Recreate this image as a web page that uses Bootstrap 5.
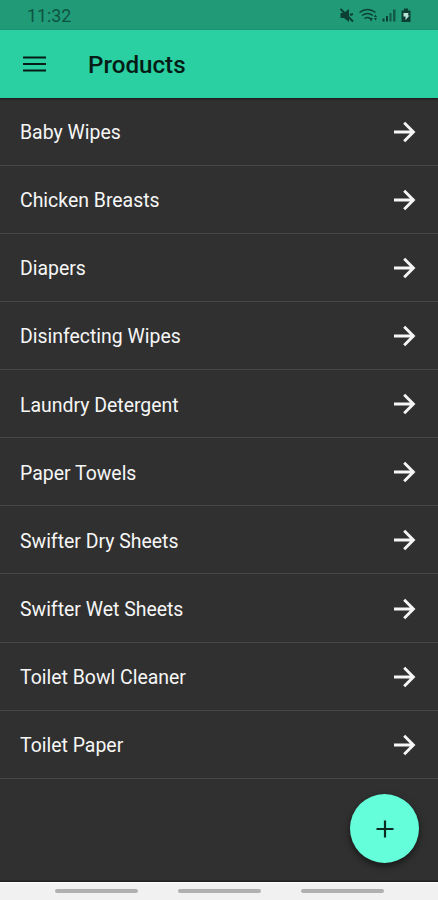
<!DOCTYPE html>
<html lang="en">
<head>
<meta charset="utf-8">
<meta name="viewport" content="width=device-width, initial-scale=1">
<title>Products</title>
<link rel="stylesheet" href="https://cdn.jsdelivr.net/npm/bootstrap@5.3.0/dist/css/bootstrap.min.css">
<style>
body { font-family: Roboto, "Liberation Sans", sans-serif; background: #303030; }
.screen { height: 900px; }
.status-bar { height: 29.5px; background: #219a78; color: #0d5440; padding: 3px 24px 0 27px; font-size: 17.8px; }
.app-bar { height: 68px; background: #2acfa2; color: #051c16; padding: 0 22px; gap: 42px; box-shadow: 0 1px 2px rgba(0,0,0,.5); z-index: 1; }
.app-title { font-size: 24.2px; font-weight: 500; line-height: 1; padding-top: 3px; }
.product-row { height: 68.15px; padding: 1px 22px 0 20px; border-bottom: 1px solid #474747; color: #f6f6f6; font-size: 19.45px; }
.product-row span { padding-top: 2px; }
.fab { right: 19px; bottom: 37px; width: 69px; height: 69px; background: #64ffda; color: #0b2a22; box-shadow: 0 3px 7px rgba(0,0,0,.55); }
.nav-strip { height: 18.5px; background: #f1f1f1; border-top: 1px solid #fff; box-shadow: 0 -1px 1px #1d1d1d; gap: 40px; }
.nav-pill { width: 83px; height: 4px; background: #b0b0b0; }
</style>
<script src="https://cdn.jsdelivr.net/npm/bootstrap@5.3.0/dist/js/bootstrap.bundle.min.js"></script>
</head>
<body>
<svg class="d-none">
  <symbol id="arrow" viewBox="0 0 24 24"><path d="M2 12H21M12.2 2.8L21.4 12L12.2 21.2" fill="none" stroke="currentColor" stroke-width="2.9"/></symbol>
</svg>
<div class="screen position-relative d-flex flex-column overflow-hidden">
  <div class="status-bar d-flex align-items-center justify-content-between flex-shrink-0">
    <span>11:32</span>
    <svg width="76" height="18" viewBox="0 0 76 18" fill="#0b4032">
      <path d="M2.500 6H6L11 2V15L6 11H2.500Z"/>
      <path d="M2.500 2L15 14.500M12 8L15 7" stroke="#0b4032" stroke-width="2"/>
      <g fill="none" stroke="#0b4032" stroke-width="1.500"><path d="M21.500 5.500Q29.500 -.5 37.500 5.500M24 8.500Q29.500 4.500 35 8.500M26.500 11.500Q29.500 9.500 32.500 11.500"/></g>
      <path d="M31 11H35L33 14.500Z M36 10L37.500 7.500L39 10Z M36 11H39L37.500 13.500Z"/>
      <path d="M44.500 11.500H46.500V14.500H44.500Z M48 9H50V14.500H48Z"/>
      <path d="M51.500 6H53.500V14.500H51.500Z M55 2.500H57.500V14.500H55Z" opacity=".7"/>
      <path d="M66 1.500H70V3.500H72.500V15H63.500V3.500H66Z"/>
      <path d="M65.500 6H70.500L70 8.500H71.500L67.500 13V9.500H65.500Z" fill="#b9e3d6"/>
    </svg>
  </div>
  <header class="app-bar d-flex align-items-center flex-shrink-0">
    <svg width="24" height="24" viewBox="0 0 24 24" stroke="currentColor" stroke-width="2.200"><path d="M1 5.500H24M1 12H24M1 18.500H24"/></svg>
    <h1 class="app-title mb-0">Products</h1>
  </header>
  <main class="flex-grow-1">
    <div class="product-row d-flex align-items-center justify-content-between"><span>Baby Wipes</span><svg width="24" height="24"><use href="#arrow"/></svg></div>
    <div class="product-row d-flex align-items-center justify-content-between"><span>Chicken Breasts</span><svg width="24" height="24"><use href="#arrow"/></svg></div>
    <div class="product-row d-flex align-items-center justify-content-between"><span>Diapers</span><svg width="24" height="24"><use href="#arrow"/></svg></div>
    <div class="product-row d-flex align-items-center justify-content-between"><span>Disinfecting Wipes</span><svg width="24" height="24"><use href="#arrow"/></svg></div>
    <div class="product-row d-flex align-items-center justify-content-between"><span>Laundry Detergent</span><svg width="24" height="24"><use href="#arrow"/></svg></div>
    <div class="product-row d-flex align-items-center justify-content-between"><span>Paper Towels</span><svg width="24" height="24"><use href="#arrow"/></svg></div>
    <div class="product-row d-flex align-items-center justify-content-between"><span>Swifter Dry Sheets</span><svg width="24" height="24"><use href="#arrow"/></svg></div>
    <div class="product-row d-flex align-items-center justify-content-between"><span>Swifter Wet Sheets</span><svg width="24" height="24"><use href="#arrow"/></svg></div>
    <div class="product-row d-flex align-items-center justify-content-between"><span>Toilet Bowl Cleaner</span><svg width="24" height="24"><use href="#arrow"/></svg></div>
    <div class="product-row d-flex align-items-center justify-content-between"><span>Toilet Paper</span><svg width="24" height="24"><use href="#arrow"/></svg></div>
  </main>
  <button class="fab btn rounded-circle border-0 p-0 position-absolute d-flex align-items-center justify-content-center" aria-label="Add product">
    <svg width="18" height="18" viewBox="0 0 18 18" stroke="currentColor" stroke-width="2.200"><path d="M9 .5V17.500M.5 9H17.500"/></svg>
  </button>
  <footer class="nav-strip d-flex align-items-center justify-content-center flex-shrink-0">
    <span class="nav-pill rounded-pill"></span><span class="nav-pill rounded-pill"></span><span class="nav-pill rounded-pill"></span>
  </footer>
</div>
</body>
</html>
